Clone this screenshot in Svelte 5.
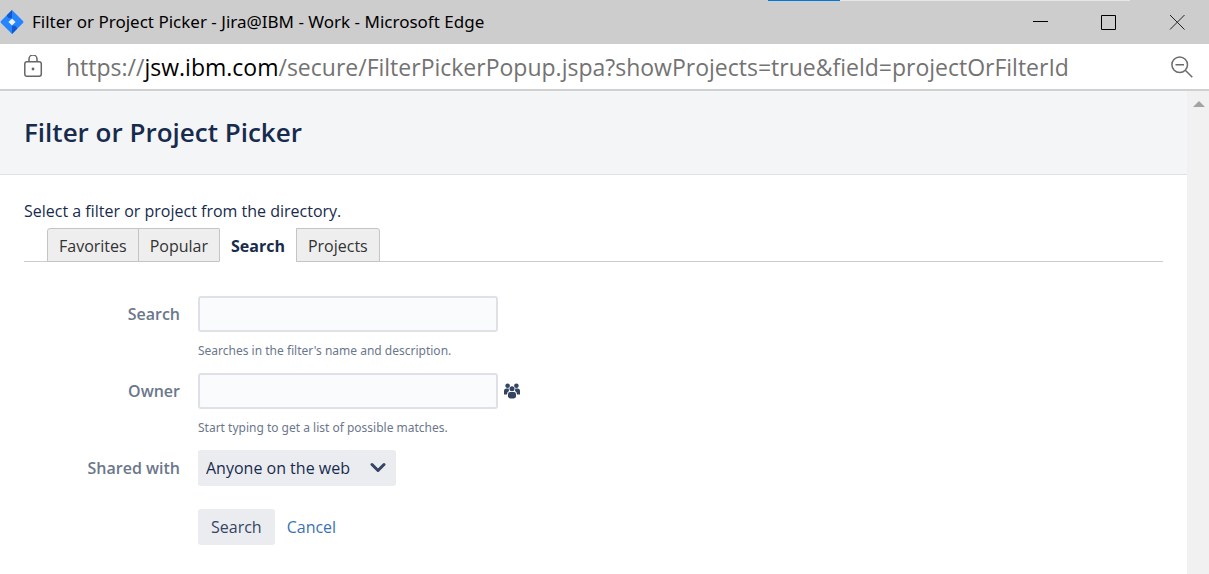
<script>
  const title = 'Filter or Project Picker';
  const tabs = ['Favorites', 'Popular', 'Search', 'Projects'];
  let active = $state('Search');
  let query = $state('');
  let owner = $state('');
  let shared = $state('Anyone on the web');
</script>

<div class="window">
  <header class="titlebar">
    <div class="loading"><span></span></div>
    <svg class="logo" width="24" height="24" viewBox="0 0 24 24" aria-hidden="true">
      <path fill="#2684ff" d="M12 0 23 11Q24 12 23 13L12 24 1 13Q0 12 1 11Z" />
      <path fill="#1259cf" d="M12 0 6.8 5.2Q7.5 8.6 12 8.4ZM12 24l5.2-5.2Q16.5 15.4 12 15.6Z" />
      <path fill="#e8f0fa" d="m12 8.4 3.6 3.6-3.6 3.6L8.4 12Z" />
    </svg>
    <span class="caption">{title} - Jira@IBM - Work - Microsoft Edge</span>
    <button class="control" aria-label="Minimize">
      <svg width="16" height="16" viewBox="0 0 16 16"><path d="M0 7.5h15" stroke="#000" /></svg>
    </button>
    <button class="control" aria-label="Maximize">
      <svg width="16" height="16" viewBox="0 0 16 16"><path d="M.5 1.5h14v14H.5z" fill="none" stroke="#000" /></svg>
    </button>
    <button class="control" aria-label="Close">
      <svg width="16" height="16" viewBox="0 0 16 16"><path d="m1 1 14.500 14.500m0-14.500L1 15.500" stroke="#222" /></svg>
    </button>
  </header>

  <div class="address">
    <svg width="20" height="24" viewBox="0 0 20 24" fill="none" stroke="#666" stroke-width="1.5" aria-hidden="true">
      <rect x="1.800" y="6.800" width="16.500" height="14.500" rx="2.200" />
      <path d="M6 6.800V4a4 4 0 0 1 8 0v2.800" />
      <circle cx="10" cy="14" r="1.400" fill="#666" stroke="none" />
    </svg>
    <span class="url">https://<b>jsw.ibm.com</b>/secure/FilterPickerPopup.jspa?showProjects=true&amp;field=projectOrFilterId</span>
    <button class="zoom" aria-label="Zoom out">
      <svg width="22" height="22" viewBox="0 0 22 22" fill="none" stroke="#6b6b6b" stroke-width="1.5">
        <circle cx="8.7" cy="8.7" r="7.8" />
        <path d="M4.5 8.7h8.5M14.3 14.3l7 7" />
      </svg>
    </button>
  </div>

  <div class="viewport">
    <div class="page">
      <div class="heading"><h1>{title}</h1></div>
      <main>
        <p class="intro">Select a filter or project from the directory.</p>
        <div class="tabs" role="tablist">
          {#each tabs as tab}
            <button role="tab" aria-selected={active === tab} class:active={active === tab} onclick={() => (active = tab)}>{tab}</button>
          {/each}
        </div>
        <form onsubmit={(e) => e.preventDefault()}>
          <label for="query">Search</label>
          <div class="field">
            <input id="query" type="text" bind:value={query} />
            <p class="hint">Searches in the filter's name and description.</p>
          </div>
          <label for="owner">Owner</label>
          <div class="field">
            <div class="line">
              <input id="owner" type="text" bind:value={owner} />
              <button type="button" class="people" aria-label="Select a user">
                <svg width="16" height="16" viewBox="0 0 16 16" fill="#344563">
                  <circle cx="3.6" cy="2.8" r="2.3" /><circle cx="12.4" cy="2.8" r="2.3" />
                  <path d="M0 11.5V8q0-2.5 2.5-2.5h2.2L5 8Q3 8.6 3 11.5ZM16 11.5V8q0-2.5-2.5-2.5h-2.2L11 8q2 .6 2 3.5Z" />
                  <circle cx="8" cy="5.8" r="2.5" />
                  <path d="M4 13.2v-2Q4 9 6 9h4q2 0 2 2.2v2Q12 15.5 8 15.5T4 13.2Z" />
                </svg>
              </button>
            </div>
            <p class="hint">Start typing to get a list of possible matches.</p>
          </div>
          <label for="shared">Shared with</label>
          <div class="picker">
            <select id="shared" bind:value={shared}>
              <option>Anyone on the web</option>
            </select>
            <svg width="16" height="12" viewBox="0 0 16 12" aria-hidden="true">
              <path d="m2 2.500 6 6 6-6" fill="none" stroke="#344563" stroke-width="3" stroke-linecap="round" stroke-linejoin="round" />
            </svg>
          </div>
          <div class="actions">
            <button class="submit">Search</button>
            <a href="#cancel">Cancel</a>
          </div>
        </form>
      </main>
    </div>
    <div class="scrollbar">
      <svg width="12" height="6" viewBox="0 0 12 6" aria-hidden="true"><path d="M0 6 6 0 12 6Z" fill="#a3a3a3" /></svg>
    </div>
  </div>
</div>

<style>
  :global(body) { margin: 0; }
  .window {
    display: flex;
    flex-direction: column;
    min-height: 100vh;
    background: #fff;
    color: #172b4d;
    font: 16px/24px "Open Sans", "Noto Sans", sans-serif;
  }
  button, input, select { font: inherit; color: inherit; border: 0; margin: 0; padding: 0; box-sizing: border-box; }
  button { background: none; cursor: pointer; }
  svg { display: block; flex: none; }
  p, h1 { margin: 0; }

  .titlebar { position: relative; display: flex; align-items: center; height: 44px; background: #cdcdcd; color: #000; }
  .loading { position: absolute; top: 0; left: 768px; width: 362px; height: 1px; background: #e6e6e6; }
  .loading span { display: block; width: 20%; height: 1px; background: #0078d7; }
  .caption { flex: 1; margin-left: 8px; font-family: "Noto Sans", sans-serif; font-size: 17px; white-space: nowrap; }
  .control { display: flex; align-items: center; justify-content: center; width: 68px; height: 44px; }
  .control:last-child { width: 64px; margin-left: 2px; }

  .address { display: flex; align-items: center; height: 45px; padding: 0 16px 0 23px; border-bottom: 2px solid #d0d0d0; }
  .url { flex: 1; margin: 0 0 0 23px; font-size: 23px; line-height: 32px; color: #737373; white-space: nowrap; }
  .url b { font-weight: 400; color: #000; }

  .viewport { flex: 1; display: flex; }
  .page { flex: 1; }
  .scrollbar { display: flex; justify-content: center; width: 22px; padding: 10px 0 0 2px; box-sizing: border-box; background: #f1f1f1; }
  .heading { padding: 24px; border-bottom: 1px solid #dfe1e6; background: #f4f5f7; }
  h1 { font-size: 26px; line-height: 35px; font-weight: 600; }
  main { padding: 24px; }
  .tabs { display: flex; margin-top: 5px; padding-left: 23px; border-bottom: 1px solid #ccc; }
  .tabs button { height: 34px; margin: 0 -1px -1px 0; padding: 1px 11px 0; border: 1px solid #c4c4c4; background: #eee; color: #333; }
  .tabs button:first-child { border-top-left-radius: 3px; }
  .tabs button:last-child { border-top-right-radius: 3px; }
  .tabs .active { border-color: #fff #c4c4c4; background: #fff; color: #172b4d; font-weight: 700; }

  form { display: grid; grid-template-columns: 156px 1fr; column-gap: 18px; margin-top: 34px; }
  label { padding-top: 6px; text-align: right; color: #6b778c; font-weight: 600; }
  .field { margin-bottom: 12px; }
  input { display: block; width: 300px; height: 36px; padding: 0 8px; border: 2px solid #dfe1e6; border-radius: 3px; background: #fafbfc; }
  .line { display: flex; align-items: center; gap: 6px; }
  .hint { margin-top: 9px; font-family: "Noto Sans", sans-serif; font-size: 12px; line-height: 20px; color: #6b778c; }
  .picker { display: grid; align-items: center; justify-content: start; }
  .picker > * { grid-area: 1 / 1; }
  .picker svg { justify-self: end; margin-right: 10px; pointer-events: none; }
  select { appearance: none; width: 198px; height: 36px; padding: 0 8px; border-radius: 3px; background: #ebecf0; }
  .actions { grid-column: 2; display: flex; align-items: center; gap: 12px; margin-top: 23px; }
  .submit { height: 36px; padding: 0 13px; border-radius: 3px; background: #ebecf0; color: #344563; }
  a { color: #3b73af; text-decoration: none; }
</style>
